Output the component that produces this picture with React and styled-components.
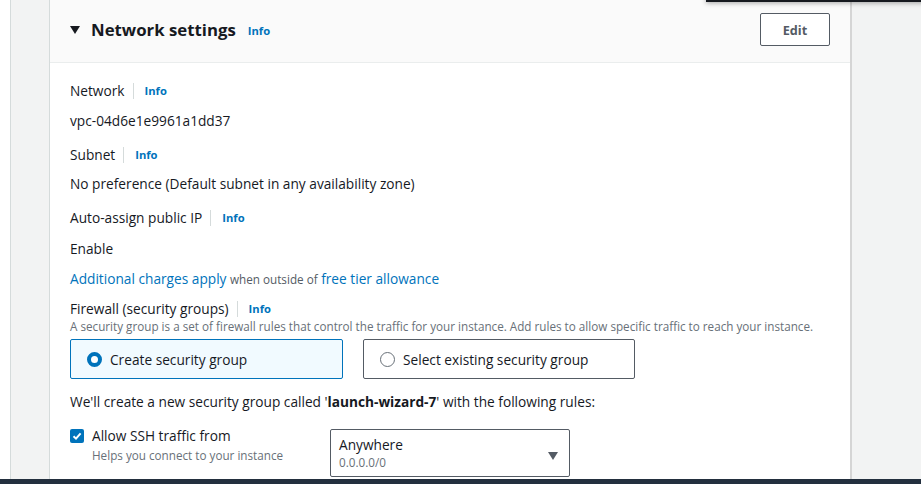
import React from "react";
import styled, { createGlobalStyle } from "styled-components";

const GlobalStyle = createGlobalStyle`
  html, body { margin: 0; padding: 0; background: #ffffff; }
  body { font-family: "Open Sans", "Noto Sans", Arial, sans-serif; color: #16191f; }
  * { box-sizing: border-box; }
`;

const Page = styled.div`
  position: relative;
  width: 921px;
  height: 484px;
  display: flex;
  flex-direction: column;
  overflow: hidden;
`;

const Main = styled.div`
  flex: 1;
  display: flex;
  min-height: 0;
`;

const Gutter = styled.div`
  width: 10px;
  background: #ffffff;
`;

const Rail = styled.div`
  width: 40px;
  background: #f2f3f3;
  border-left: 1px solid #d5dbdb;
  border-right: 1px solid #d5dbdb;
`;

const SideFill = styled.div`
  flex: 1;
  background: #f2f3f3;
  border-left: 2px solid #d5d5d5;
`;

const Panel = styled.section`
  width: 800px;
  background: #ffffff;
  display: flex;
  flex-direction: column;
`;

const Header = styled.div`
  height: 63px;
  background: #fafafa;
  border-bottom: 1px solid #eaeded;
  display: flex;
  align-items: center;
  justify-content: space-between;
  padding: 0 20px;
`;

const TitleGroup = styled.div`
  display: flex;
  align-items: center;
  margin-top: -3px;
`;

const Caret = styled.span`
  width: 0;
  height: 0;
  border-left: 5px solid transparent;
  border-right: 5px solid transparent;
  border-top: 8px solid #16191f;
  margin-right: 11px;
  margin-top: 1px;
`;

const Title = styled.h2`
  margin: 0;
  font-size: 16.8px;
  font-weight: 700;
  line-height: 22px;
  color: #16191f;
  margin-right: 12px;
`;

const InfoLink = styled.a`
  font-size: 11.2px;
  font-weight: 700;
  color: #0073bb;
  text-decoration: none;
  line-height: 16px;
  margin-top: ${(p) => p.$mt || 0}px;
`;

const EditButton = styled.button`
  width: 70px;
  height: 33px;
  margin-top: -3px;
  background: #ffffff;
  border: 1px solid #545b64;
  border-radius: 2px;
  font-family: inherit;
  font-size: 12.7px;
  font-weight: 700;
  color: #545b64;
  padding: 0;
`;

const Body = styled.div`
  padding: 18px 20px 0 20px;
  display: flex;
  flex-direction: column;
`;

const LabelRow = styled.div`
  display: flex;
  align-items: center;
  height: 20px;
  margin-top: ${(p) => p.$mt || 0}px;
`;

const LabelText = styled.span`
  font-size: 13.7px;
  color: #16191f;
  padding-right: 8px;
  border-right: 1px solid #d5dbdb;
  line-height: 16px;
  margin-right: 11px;
`;

const Value = styled.div`
  font-size: 13.7px;
  line-height: 20px;
  margin-top: ${(p) => (p.$mt === undefined ? 10 : p.$mt)}px;
  color: #16191f;
`;

const Link = styled.a`
  color: #0073bb;
  text-decoration: none;
  font-size: 13.7px;
`;

const Muted = styled.span`
  font-size: 11.7px;
  color: #545b64;
`;

const Description = styled.div`
  font-size: 11.7px;
  line-height: 14px;
  color: #687078;
`;

const TileRow = styled.div`
  display: flex;
  gap: 20px;
  margin-top: 6px;
`;

const Tile = styled.label`
  width: ${(p) => (p.$selected ? 273 : 272)}px;
  height: 40px;
  display: flex;
  align-items: center;
  padding-left: 16px;
  border: 1px solid ${(p) => (p.$selected ? "#0073bb" : "#545b64")};
  background: ${(p) => (p.$selected ? "#f1faff" : "#ffffff")};
  border-radius: 2px;
  font-size: 13.7px;
  color: #16191f;
`;

const Radio = styled.span`
  width: 15px;
  height: 15px;
  border-radius: 50%;
  margin-right: 8px;
  background: #ffffff;
  flex-shrink: 0;
  border: ${(p) => (p.$checked ? "4.5px solid #0073bb" : "1px solid #687078")};
`;

const Notice = styled.div`
  font-size: 13.7px;
  line-height: 20px;
  margin-top: 13px;
  color: #16191f;
  b { font-weight: 700; }
`;

const RuleRow = styled.div`
  display: flex;
  margin-top: 17px;
`;

const CheckCol = styled.div`
  width: 260px;
  display: flex;
  align-items: flex-start;
`;

const Checkbox = styled.span`
  width: 14px;
  height: 14px;
  border-radius: 2px;
  background: #0073bb;
  display: flex;
  align-items: center;
  justify-content: center;
  margin-right: 8px;
  flex-shrink: 0;
`;

const CheckText = styled.div`
  display: flex;
  flex-direction: column;
`;

const CheckLabel = styled.span`
  font-size: 13.7px;
  line-height: 14px;
  color: #16191f;
`;

const Help = styled.span`
  font-size: 11.7px;
  line-height: 14px;
  color: #687078;
  margin-top: 5px;
`;

const Select = styled.div`
  width: 240px;
  height: 48px;
  border: 1px solid #545b64;
  border-radius: 2px;
  display: flex;
  align-items: center;
  justify-content: space-between;
  padding: 0 11px 0 8px;
`;

const SelectText = styled.div`
  display: flex;
  flex-direction: column;
`;

const SelectMain = styled.span`
  font-size: 13.7px;
  line-height: 17px;
  color: #16191f;
`;

const SelectSub = styled.span`
  font-size: 11.7px;
  line-height: 15px;
  color: #687078;
  margin-top: 2px;
`;

const SelectCaret = styled.span`
  width: 0;
  height: 0;
  border-left: 5px solid transparent;
  border-right: 5px solid transparent;
  border-top: 8px solid #545b64;
  margin-top: 6px;
`;

const BottomBar = styled.div`
  height: 5px;
  background: #232f3e;
`;

const PopoverEdge = styled.div`
  position: absolute;
  top: -4px;
  left: 706px;
  width: 230px;
  height: 6px;
  background: #16191f;
  box-shadow: 0 1px 5px rgba(0, 0, 0, 0.35);
`;

function Label({ children, mt }) {
  return (
    <LabelRow $mt={mt}>
      <LabelText>{children}</LabelText>
      <InfoLink href="#">Info</InfoLink>
    </LabelRow>
  );
}

export default function App() {
  return (
    <>
      <GlobalStyle />
      <Page>
        <Main>
          <Gutter />
          <Rail />
          <Panel>
            <Header>
              <TitleGroup>
                <Caret />
                <Title>Network settings</Title>
                <InfoLink href="#" $mt={3}>Info</InfoLink>
              </TitleGroup>
              <EditButton>Edit</EditButton>
            </Header>
            <Body>
              <Label>Network</Label>
              <Value>vpc-04d6e1e9961a1dd37</Value>
              <Label mt={14}>Subnet</Label>
              <Value $mt={9}>No preference (Default subnet in any availability zone)</Value>
              <Label mt={14}>Auto-assign public IP</Label>
              <Value $mt={11}>Enable</Value>
              <Value>
                <Link href="#">Additional charges apply</Link>{" "}
                <Muted>when outside of</Muted>{" "}
                <Link href="#">free tier allowance</Link>
              </Value>
              <Label mt={10}>Firewall (security groups)</Label>
              <Description>
                A security group is a set of firewall rules that control the traffic for your instance. Add rules to allow specific traffic to reach your instance.
              </Description>
              <TileRow>
                <Tile $selected>
                  <Radio $checked />
                  Create security group
                </Tile>
                <Tile>
                  <Radio />
                  Select existing security group
                </Tile>
              </TileRow>
              <Notice>
                We'll create a new security group called '<b>launch-wizard-7</b>' with the following rules:
              </Notice>
              <RuleRow>
                <CheckCol>
                  <Checkbox>
                    <svg width="10" height="10" viewBox="0 0 10 10">
                      <path d="M1.5 5.2 L4 7.6 L8.6 2.4" fill="none" stroke="#fff" strokeWidth="2" />
                    </svg>
                  </Checkbox>
                  <CheckText>
                    <CheckLabel>Allow SSH traffic from</CheckLabel>
                    <Help>Helps you connect to your instance</Help>
                  </CheckText>
                </CheckCol>
                <Select>
                  <SelectText>
                    <SelectMain>Anywhere</SelectMain>
                    <SelectSub>0.0.0.0/0</SelectSub>
                  </SelectText>
                  <SelectCaret />
                </Select>
              </RuleRow>
            </Body>
          </Panel>
          <SideFill />
        </Main>
        <BottomBar />
        <PopoverEdge />
      </Page>
    </>
  );
}
